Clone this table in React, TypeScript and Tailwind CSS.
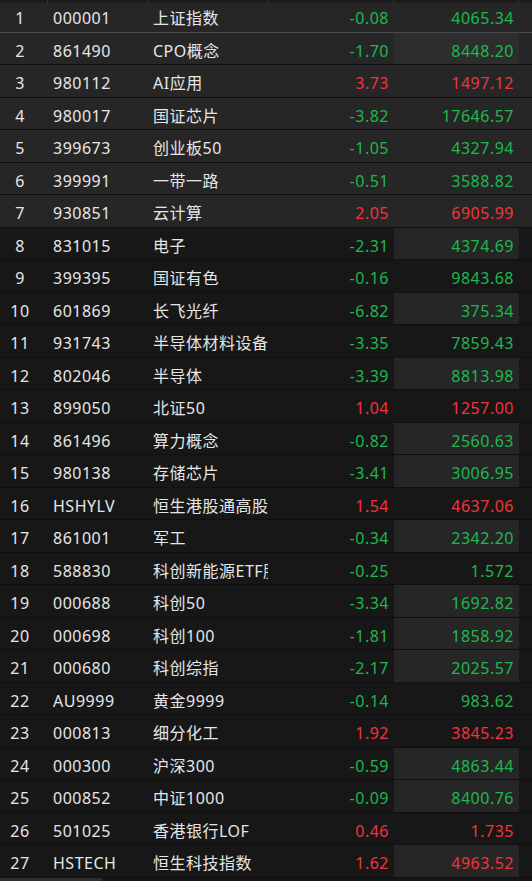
import React from "react";

type Row = [string, string, string, number, string];

const rows: Row[] = [
  ["1", "000001", "上证指数", -0.08, "4065.34"],
  ["2", "861490", "CPO概念", -1.7, "8448.20"],
  ["3", "980112", "AI应用", 3.73, "1497.12"],
  ["4", "980017", "国证芯片", -3.82, "17646.57"],
  ["5", "399673", "创业板50", -1.05, "4327.94"],
  ["6", "399991", "一带一路", -0.51, "3588.82"],
  ["7", "930851", "云计算", 2.05, "6905.99"],
  ["8", "831015", "电子", -2.31, "4374.69"],
  ["9", "399395", "国证有色", -0.16, "9843.68"],
  ["10", "601869", "长飞光纤", -6.82, "375.34"],
  ["11", "931743", "半导体材料设备", -3.35, "7859.43"],
  ["12", "802046", "半导体", -3.39, "8813.98"],
  ["13", "899050", "北证50", 1.04, "1257.00"],
  ["14", "861496", "算力概念", -0.82, "2560.63"],
  ["15", "980138", "存储芯片", -3.41, "3006.95"],
  ["16", "HSHYLV", "恒生港股通高股息", 1.54, "4637.06"],
  ["17", "861001", "军工", -0.34, "2342.20"],
  ["18", "588830", "科创新能源ETF股", -0.25, "1.572"],
  ["19", "000688", "科创50", -3.34, "1692.82"],
  ["20", "000698", "科创100", -1.81, "1858.92"],
  ["21", "000680", "科创综指", -2.17, "2025.57"],
  ["22", "AU9999", "黄金9999", -0.14, "983.62"],
  ["23", "000813", "细分化工", 1.92, "3845.23"],
  ["24", "000300", "沪深300", -0.59, "4863.44"],
  ["25", "000852", "中证1000", -0.09, "8400.76"],
  ["26", "501025", "香港银行LOF", 0.46, "1.735"],
  ["27", "HSTECH", "恒生科技指数", 1.62, "4963.52"],
];

const highlighted = new Set([2, 8, 10, 12, 14, 15, 17, 19, 20, 21, 24, 25, 27]);

export default function App() {
  return (
    <div
      className="relative w-[532px] h-[881px] overflow-hidden bg-[#161616] text-[16px] tracking-[0.5px]"
      style={{ fontFamily: '"Noto Sans", "Noto Sans CJK SC", sans-serif' }}
    >
      <div className="absolute left-0 top-0 z-10 flex h-[3px] w-[532px] bg-[#1c1c1c]">
        <div className="w-[48px] border-r border-[#333]" />
        <div className="w-[100px] border-r border-[#333]" />
        <div className="w-[120px] border-r border-[#333]" />
        <div className="w-[126px] border-r border-[#333]" />
        <div className="w-[125px] border-r border-[#333]" />
      </div>
      {rows.map((r, i) => {
        const n = i + 1;
        const top = n <= 7;
        const up = r[3] > 0;
        const color = up ? "text-[#f2333d]" : "text-[#1db84e]";
        const rowBg = top ? "bg-[#262626]" : "bg-[#171717]";
        const hl = highlighted.has(n) ? (top ? "bg-[#2d2d2d]" : "bg-[#262626]") : "";
        const border = n === 1 ? "border-[#4a4a4a]" : "border-[#101010]";
        return (
          <div
            key={n}
            className={`flex h-[32.5px] items-stretch border-b ${border} ${rowBg}`}
          >
            <div className="flex w-[48px] items-center justify-center pr-[8px] pt-[5px] text-[#e6e6e6]">
              {r[0]}
            </div>
            <div className="flex w-[100px] items-center pl-[5px] pt-[5px] text-[#e6e6e6]">
              {r[1]}
            </div>
            <div className="flex w-[120px] items-center overflow-hidden whitespace-nowrap pl-[5px] pt-[5px] text-[#e6e6e6]">
              {r[2]}
            </div>
            <div className={`flex w-[126px] items-center justify-end pr-[5px] pt-[5px] ${color}`}>
              {r[3].toFixed(2)}
            </div>
            <div className={`flex w-[125px] items-center justify-end pr-[5px] pt-[5px] ${color} ${hl}`}>
              {r[4]}
            </div>
          </div>
        );
      })}
      <div className="h-[4px] w-[102px] bg-[#2e2e2e]" />
    </div>
  );
}
